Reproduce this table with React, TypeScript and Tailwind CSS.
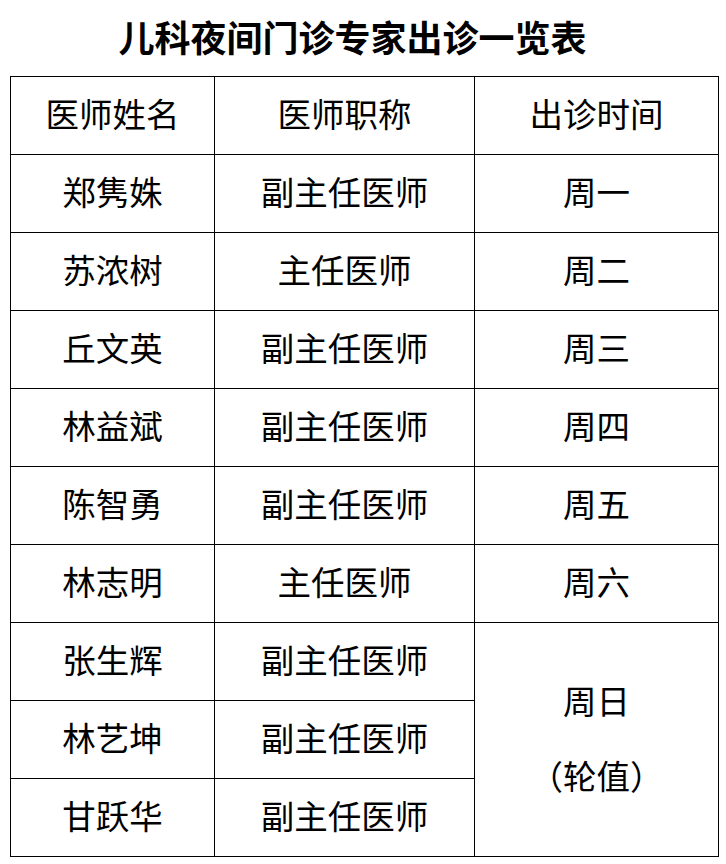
const rows: { name: string; title: string; day?: string }[] = [
  { name: '郑隽姝', title: '副主任医师', day: '周一' },
  { name: '苏浓树', title: '主任医师', day: '周二' },
  { name: '丘文英', title: '副主任医师', day: '周三' },
  { name: '林益斌', title: '副主任医师', day: '周四' },
  { name: '陈智勇', title: '副主任医师', day: '周五' },
  { name: '林志明', title: '主任医师', day: '周六' },
  { name: '张生辉', title: '副主任医师' },
  { name: '林艺坤', title: '副主任医师' },
  { name: '甘跃华', title: '副主任医师' },
];

const cell = 'border border-black text-center align-middle h-[78px] p-0 pb-[5px]';

export default function App() {
  return (
    <div
      className="w-[726px] h-[864px] bg-white text-black"
      style={{ fontFamily: '"Noto Sans CJK SC", "Noto Sans", sans-serif' }}
    >
      <h1 className="h-[76px] flex items-center justify-center text-[36px] font-bold leading-none pb-1 pr-[21px]">
        儿科夜间门诊专家出诊一览表
      </h1>
      <div className="px-[10px]">
        <table className="w-[708px] border-collapse table-fixed text-[33.5px] leading-none">
          <colgroup>
            <col className="w-[204px]" />
            <col className="w-[260px]" />
            <col className="w-[244px]" />
          </colgroup>
          <thead>
            <tr>
              <th className={`${cell} font-normal`}>医师姓名</th>
              <th className={`${cell} font-normal`}>医师职称</th>
              <th className={`${cell} font-normal`}>出诊时间</th>
            </tr>
          </thead>
          <tbody>
            {rows.map((r, i) => (
              <tr key={r.name}>
                <td className={cell}>{r.name}</td>
                <td className={cell}>{r.title}</td>
                {r.day && <td className={cell}>{r.day}</td>}
                {i === 6 && (
                  <td rowSpan={3} className={cell}>
                    <div className="flex flex-col items-center gap-[41px]">
                      <span>周日</span>
                      <span>（轮值）</span>
                    </div>
                  </td>
                )}
              </tr>
            ))}
          </tbody>
        </table>
      </div>
    </div>
  );
}
